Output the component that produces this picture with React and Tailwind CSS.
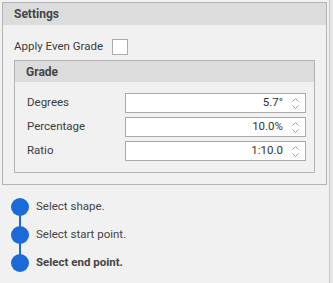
import React, { useState } from "react";

const font = { fontFamily: '"Segoe UI", Roboto, "Liberation Sans", Arial, sans-serif' };

function Spinner() {
  return (
    <div className="flex flex-col items-center justify-center w-[12px] gap-[3px]">
      <svg width="7" height="4" viewBox="0 0 7 4">
        <path d="M0.5 3.5 L3.5 0.5 L6.5 3.5" fill="none" stroke="#9a9a9a" strokeWidth="1" />
      </svg>
      <svg width="7" height="4" viewBox="0 0 7 4">
        <path d="M0.5 0.5 L3.5 3.5 L6.5 0.5" fill="none" stroke="#9a9a9a" strokeWidth="1" />
      </svg>
    </div>
  );
}

function NumberRow({ label, value }) {
  return (
    <div className="flex items-center h-[20px]">
      <div className="w-[110px] pl-[12px] text-[11.5px] text-[#3c3c3c]">{label}</div>
      <div className="flex items-center w-[181px] h-[20px] bg-white border border-[#aaaaaa]">
        <div className="flex-1 text-right pr-[6px] text-[11.5px] text-[#333]">{value}</div>
        <div className="pr-[4px]">
          <Spinner />
        </div>
      </div>
    </div>
  );
}

function Step({ text, bold, first, last }) {
  return (
    <div className="flex items-center h-[28px]">
      <div className="relative w-[36px] h-[28px] flex items-center justify-center pl-[4px]">
        {!first && <div className="absolute left-[19px] top-0 h-[14px] w-[2px] bg-[#1b6ad8]" />}
        {!last && <div className="absolute left-[19px] bottom-0 h-[14px] w-[2px] bg-[#1b6ad8]" />}
        <div className="relative w-[18px] h-[18px] rounded-full bg-[#1b6ad8]" />
      </div>
      <div className={`text-[11.5px] text-[#444] ${bold ? "font-bold" : ""}`}>{text}</div>
    </div>
  );
}

export default function App() {
  const [even, setEven] = useState(false);

  return (
    <div className="flex w-[333px] h-[283px] bg-[#f1f1f1] overflow-hidden" style={font}>
      <div className="flex-1 pt-[2px] pl-[2px] pr-[2px]">
        <div className="border border-[#b3b3b3] bg-[#f1f1f1]">
          <div className="h-[22px] bg-[#dcdcdc] flex items-center pl-[11px] text-[12px] font-bold text-[#454545]">
            Settings
          </div>
          <div className="flex items-center h-[16px] mt-[14px] pl-[11px]">
            <span className="text-[11.5px] text-[#3c3c3c] w-[98px]">Apply Even Grade</span>
            <button
              onClick={() => setEven(!even)}
              className="w-[16px] h-[16px] bg-white border border-[#ababab]"
            />
          </div>
          <div className="mx-[11px] mt-[5px] mb-[11px] border border-[#b3b3b3]">
            <div className="h-[21px] bg-[#dcdcdc] flex items-center pl-[11px] text-[12px] font-bold text-[#454545]">
              Grade
            </div>
            <div className="flex flex-col gap-[4px] pt-[11px] pb-[11px]">
              <NumberRow label="Degrees" value="5.7°" />
              <NumberRow label="Percentage" value="10.0%" />
              <NumberRow label="Ratio" value="1:10.0" />
            </div>
          </div>
        </div>
        <div className="mt-[8px] -ml-[2px]">
          <Step text="Select shape." first />
          <Step text="Select start point." />
          <Step text="Select end point." bold last />
        </div>
      </div>
      <div className="w-[4px] h-full border-l border-[#c9c9c9] bg-[#e6e6e6]" />
    </div>
  );
}
